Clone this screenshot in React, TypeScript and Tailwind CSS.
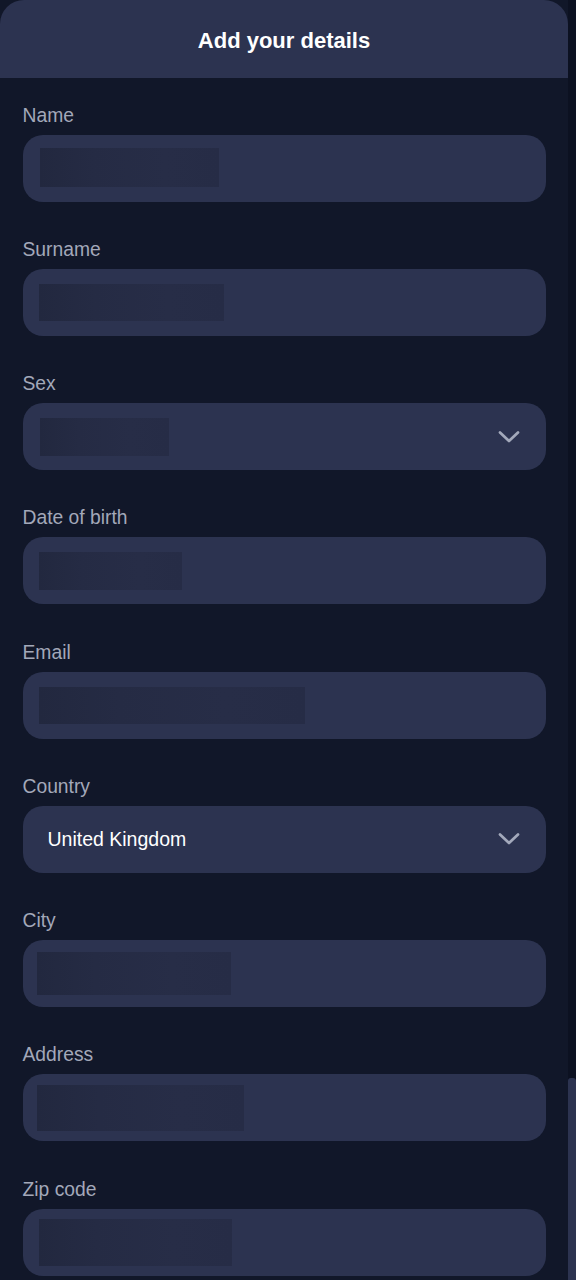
import React from "react";

type Field = {
  label: string;
  value?: string;
  select?: boolean;
  blur?: string;
};

const fields: Field[] = [
  { label: "Name", blur: "ml-[17.5px] w-[179px] h-[39px] mb-[2px]" },
  { label: "Surname", blur: "ml-[16.5px] w-[185px] h-[37px]" },
  { label: "Sex", select: true, blur: "ml-[17.5px] w-[129px] h-[38px]" },
  { label: "Date of birth", blur: "ml-[16.5px] w-[143px] h-[38px]" },
  { label: "Email", blur: "ml-[16.5px] w-[266px] h-[37px]" },
  { label: "Country", select: true, value: "United Kingdom" },
  { label: "City", blur: "ml-[14.5px] w-[194px] h-[43px]" },
  { label: "Address", blur: "ml-[14.5px] w-[207px] h-[46px]" },
  { label: "Zip code", blur: "ml-[16.5px] w-[193px] h-[47px]" },
];

function Chevron() {
  return (
    <svg width="22" height="14" viewBox="0 0 22 14" className="shrink-0" aria-hidden>
      <polyline
        points="2,2.5 11,11 20,2.5"
        fill="none"
        stroke="#a3a9bb"
        strokeWidth="2.7"
        strokeLinecap="round"
        strokeLinejoin="round"
      />
    </svg>
  );
}

export default function App() {
  return (
    <div
      className="flex w-[576px] h-[1280px] overflow-hidden bg-[#111729]"
      style={{ fontFamily: '"Liberation Sans", Arial, sans-serif' }}
    >
      <div className="flex flex-col w-[568px] shrink-0">
        <div className="h-[78px] shrink-0 bg-[#2c3350] rounded-t-[24px] flex items-center justify-center">
          <h1 className="mt-[3px] text-[22px] leading-none font-bold text-white">Add your details</h1>
        </div>
        <div className="flex flex-col gap-y-[36.25px] px-[22.5px] pt-[25.6px]">
          {fields.map((f) => (
            <div key={f.label} className="flex flex-col">
              <label className="text-[19.3px] leading-[24px] text-[#a3a8b9]">{f.label}</label>
              <div className="mt-[7px] h-[67px] rounded-[20px] bg-[#2c3350] flex items-center pr-[26px]">
                {f.value ? (
                  <span className="ml-[25px] text-[19.5px] text-white leading-none">{f.value}</span>
                ) : (
                  <div
                    className={`${f.blur} bg-[linear-gradient(90deg,#22283f_0%,#252b44_30%,#272d47_70%,#262c46_100%)]`}
                  />
                )}
                <div className="flex-1" />
                {f.select && <Chevron />}
              </div>
            </div>
          ))}
        </div>
      </div>
      <div className="w-[8px] shrink-0 flex flex-col bg-[#0c1121]">
        <div className="mt-auto h-[202px] bg-[#2c3350] rounded-t-[3px]" />
      </div>
    </div>
  );
}
